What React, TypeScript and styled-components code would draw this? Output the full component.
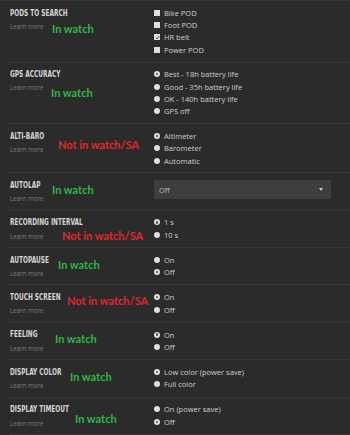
import React from "react";
import styled, { createGlobalStyle } from "styled-components";

const Global = createGlobalStyle`
  html, body { margin: 0; padding: 0; background: #2b2b2b; }
  body { width: 350px; height: 435px; overflow: hidden; }
`;

const Page = styled.div`
  width: 350px;
  height: 435px;
  background: #2b2b2b;
  border-top: 1px solid #383838;
  box-sizing: border-box;
  overflow: hidden;
`;

const Row = styled.div`
  position: relative;
  margin-left: 9px;
  display: grid;
  grid-template-columns: 145px 1fr;
  padding: 5.5px 0;
  border-bottom: 1px solid #383838;
`;

const Left = styled.div`
  display: flex;
  flex-direction: column;
  padding-left: 1px;
`;

const Title = styled.div`
  font-family: "DejaVu Sans Condensed", "Liberation Sans", sans-serif;
  font-weight: 700;
  font-size: 9px;
  line-height: 12.4px;
  height: 12.4px;
  color: #d6d6d6;
  white-space: nowrap;
  transform: scaleX(0.72);
  transform-origin: left center;
`;

const Learn = styled.div`
  font-family: "Open Sans", sans-serif;
  font-size: 6.2px;
  line-height: 11px;
  margin-top: 2px;
  color: #7c7c7c;
`;

const Note = styled.div<{ $x: number; $y: number; $bad?: boolean }>`
  position: absolute;
  left: ${(p) => p.$x}px;
  top: ${(p) => p.$y}px;
  font-family: Lato, sans-serif;
  font-weight: 700;
  font-size: 11px;
  line-height: 13px;
  color: ${(p) => (p.$bad ? "#e3262b" : "#32b548")};
  white-space: nowrap;
`;

const Options = styled.div`
  display: flex;
  flex-direction: column;
`;

const Option = styled.div`
  display: flex;
  align-items: center;
  gap: 4px;
  height: 12.4px;
  font-family: "Open Sans", sans-serif;
  font-size: 7.5px;
  color: #cfcfcf;
  white-space: nowrap;
`;

const Box = styled.span`
  width: 6px;
  height: 6px;
  background: #dedede;
  display: flex;
  align-items: center;
  justify-content: center;
  flex: none;
`;

const Radio = styled.span<{ $on?: boolean }>`
  width: 6px;
  height: 6px;
  border-radius: 50%;
  background: #dedede;
  display: flex;
  align-items: center;
  justify-content: center;
  flex: none;
  &::after {
    content: "";
    width: 2.4px;
    height: 2.4px;
    border-radius: 50%;
    background: ${(p) => (p.$on ? "#555" : "transparent")};
  }
`;

const Select = styled.div`
  margin-top: 1.5px;
  width: 177px;
  height: 19px;
  background: #3e3e3e;
  display: flex;
  align-items: center;
  justify-content: space-between;
  padding: 0 8px 0 5px;
  box-sizing: border-box;
  font-family: "Open Sans", sans-serif;
  font-size: 7.5px;
  color: #bdbdbd;
`;

const Caret = styled.span`
  width: 0;
  height: 0;
  border-left: 2.5px solid transparent;
  border-right: 2.5px solid transparent;
  border-top: 3px solid #c8c8c8;
`;

type Opt = { label: string; on?: boolean };
type Item = {
  title: string;
  kind: "check" | "radio" | "select";
  opts: Opt[];
  note: string;
  bad?: boolean;
  nx: number;
  ny: number;
};

const items: Item[] = [
  {
    title: "PODS TO SEARCH",
    kind: "check",
    opts: [{ label: "Bike POD" }, { label: "Foot POD" }, { label: "HR belt", on: true }, { label: "Power POD" }],
    note: "In watch",
    nx: 43,
    ny: 20.5,
  },
  {
    title: "GPS ACCURACY",
    kind: "radio",
    opts: [
      { label: "Best - 18h battery life", on: true },
      { label: "Good - 35h battery life" },
      { label: "OK - 140h battery life" },
      { label: "GPS off" },
    ],
    note: "In watch",
    nx: 42,
    ny: 23,
  },
  {
    title: "ALTI-BARO",
    kind: "radio",
    opts: [{ label: "Altimeter", on: true }, { label: "Barometer" }, { label: "Automatic" }],
    note: "Not in watch/SA",
    bad: true,
    nx: 49,
    ny: 14.3,
  },
  { title: "AUTOLAP", kind: "select", opts: [{ label: "Off" }], note: "In watch", nx: 43, ny: 10 },
  {
    title: "RECORDING INTERVAL",
    kind: "radio",
    opts: [{ label: "1 s", on: true }, { label: "10 s" }],
    note: "Not in watch/SA",
    bad: true,
    nx: 53,
    ny: 18.7,
  },
  {
    title: "AUTOPAUSE",
    kind: "radio",
    opts: [{ label: "On" }, { label: "Off", on: true }],
    note: "In watch",
    nx: 49,
    ny: 10.3,
  },
  {
    title: "TOUCH SCREEN",
    kind: "radio",
    opts: [{ label: "On", on: true }, { label: "Off" }],
    note: "Not in watch/SA",
    bad: true,
    nx: 58,
    ny: 9,
  },
  {
    title: "FEELING",
    kind: "radio",
    opts: [{ label: "On", on: true }, { label: "Off" }],
    note: "In watch",
    nx: 46,
    ny: 9.5,
  },
  {
    title: "DISPLAY COLOR",
    kind: "radio",
    opts: [{ label: "Low color (power save)", on: true }, { label: "Full color" }],
    note: "In watch",
    nx: 61,
    ny: 10.1,
  },
  {
    title: "DISPLAY TIMEOUT",
    kind: "radio",
    opts: [{ label: "On (power save)" }, { label: "Off", on: true }],
    note: "In watch",
    nx: 66,
    ny: 14.7,
  },
];

const Check = () => (
  <svg width="5" height="5" viewBox="0 0 10 10">
    <path d="M1.5 5.2 L4 7.8 L8.6 2" fill="none" stroke="#333" strokeWidth="1.8" />
  </svg>
);

export default function App() {
  return (
    <>
      <Global />
      <Page>
        {items.map((it) => (
          <Row key={it.title}>
            <Left>
              <Title>{it.title}</Title>
              <Learn>Learn more</Learn>
            </Left>
            {it.kind === "select" ? (
              <Select>
                <span>{it.opts[0].label}</span>
                <Caret />
              </Select>
            ) : (
              <Options>
                {it.opts.map((o) => (
                  <Option key={o.label}>
                    {it.kind === "check" ? (
                      <Box>{o.on && <Check />}</Box>
                    ) : (
                      <Radio $on={o.on} />
                    )}
                    {o.label}
                  </Option>
                ))}
              </Options>
            )}
            <Note $x={it.nx} $y={it.ny} $bad={it.bad}>
              {it.note}
            </Note>
          </Row>
        ))}
      </Page>
    </>
  );
}
